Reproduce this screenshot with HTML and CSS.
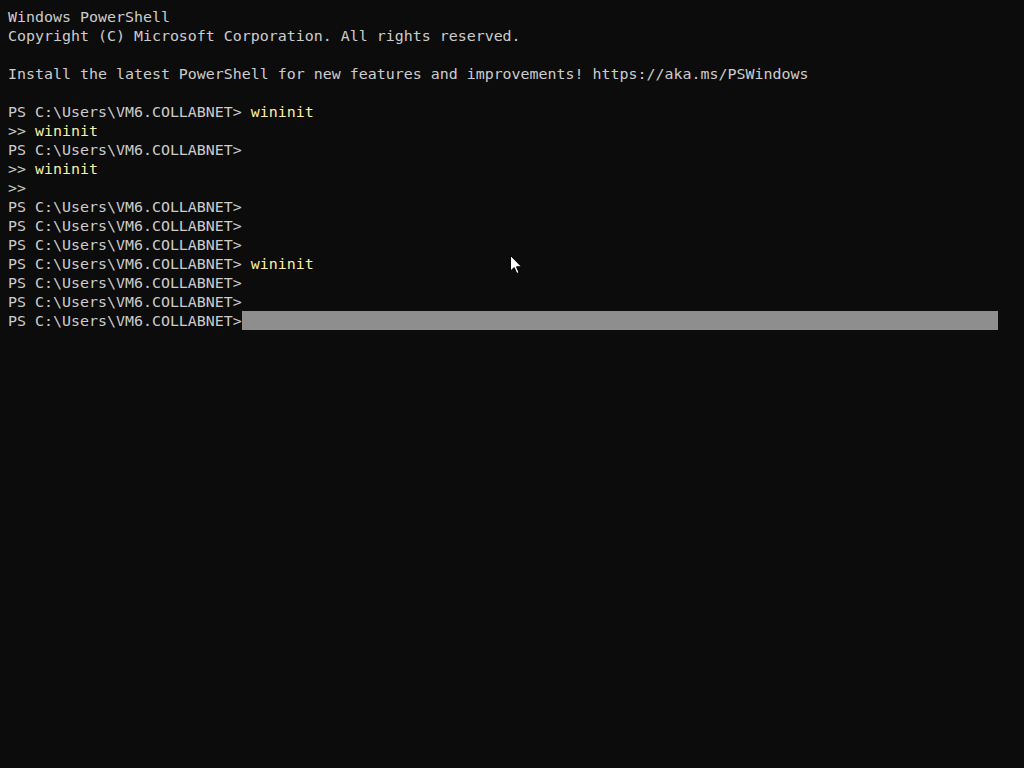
FILE: index.html
```html
<!DOCTYPE html>
<html>
<head>
<meta charset="utf-8">
<link rel="stylesheet" href="styles.css">
</head>
<body>
<pre class="term">Windows PowerShell
Copyright (C) Microsoft Corporation. All rights reserved.

Install the latest PowerShell for new features and improvements! https://aka.ms/PSWindows

PS C:\Users\VM6.COLLABNET&gt; <span class="cmd">wininit</span>
&gt;&gt; <span class="cmd">wininit</span>
PS C:\Users\VM6.COLLABNET&gt;
&gt;&gt; <span class="cmd">wininit</span>
&gt;&gt;
PS C:\Users\VM6.COLLABNET&gt;
PS C:\Users\VM6.COLLABNET&gt;
PS C:\Users\VM6.COLLABNET&gt;
PS C:\Users\VM6.COLLABNET&gt; <span class="cmd">wininit</span>
PS C:\Users\VM6.COLLABNET&gt;
PS C:\Users\VM6.COLLABNET&gt;
PS C:\Users\VM6.COLLABNET&gt;<span class="sel"></span></pre>
<svg class="pointer" width="13" height="20" viewBox="0 0 13 20"><path d="M0.5 0.5 L0.5 16 L4.2 12.6 L6.8 18.5 L9 17.5 L6.5 11.8 L11.5 11.8 Z" fill="#ffffff" stroke="#000000" stroke-width="1"/></svg>
</body>
</html>
```
FILE: styles.css
```css
html, body {
  margin: 0;
  padding: 0;
  background: #0c0c0c;
  width: 1024px;
  height: 768px;
  overflow: hidden;
}
.term {
  margin: 0;
  padding: 8px 0 0 8px;
  font-family: "DejaVu Sans Mono", "Liberation Mono", monospace;
  font-size: 14.95px;
  line-height: 19px;
  color: #cccccc;
  white-space: pre;
}
.cmd {
  color: #f9f1a5;
}
.sel {
  display: inline-block;
  width: 756px;
  height: 19px;
  margin-top: -1px;
  vertical-align: top;
  background: #8e8e8e;
}
.pointer {
  position: absolute;
  left: 510px;
  top: 255px;
}
```
